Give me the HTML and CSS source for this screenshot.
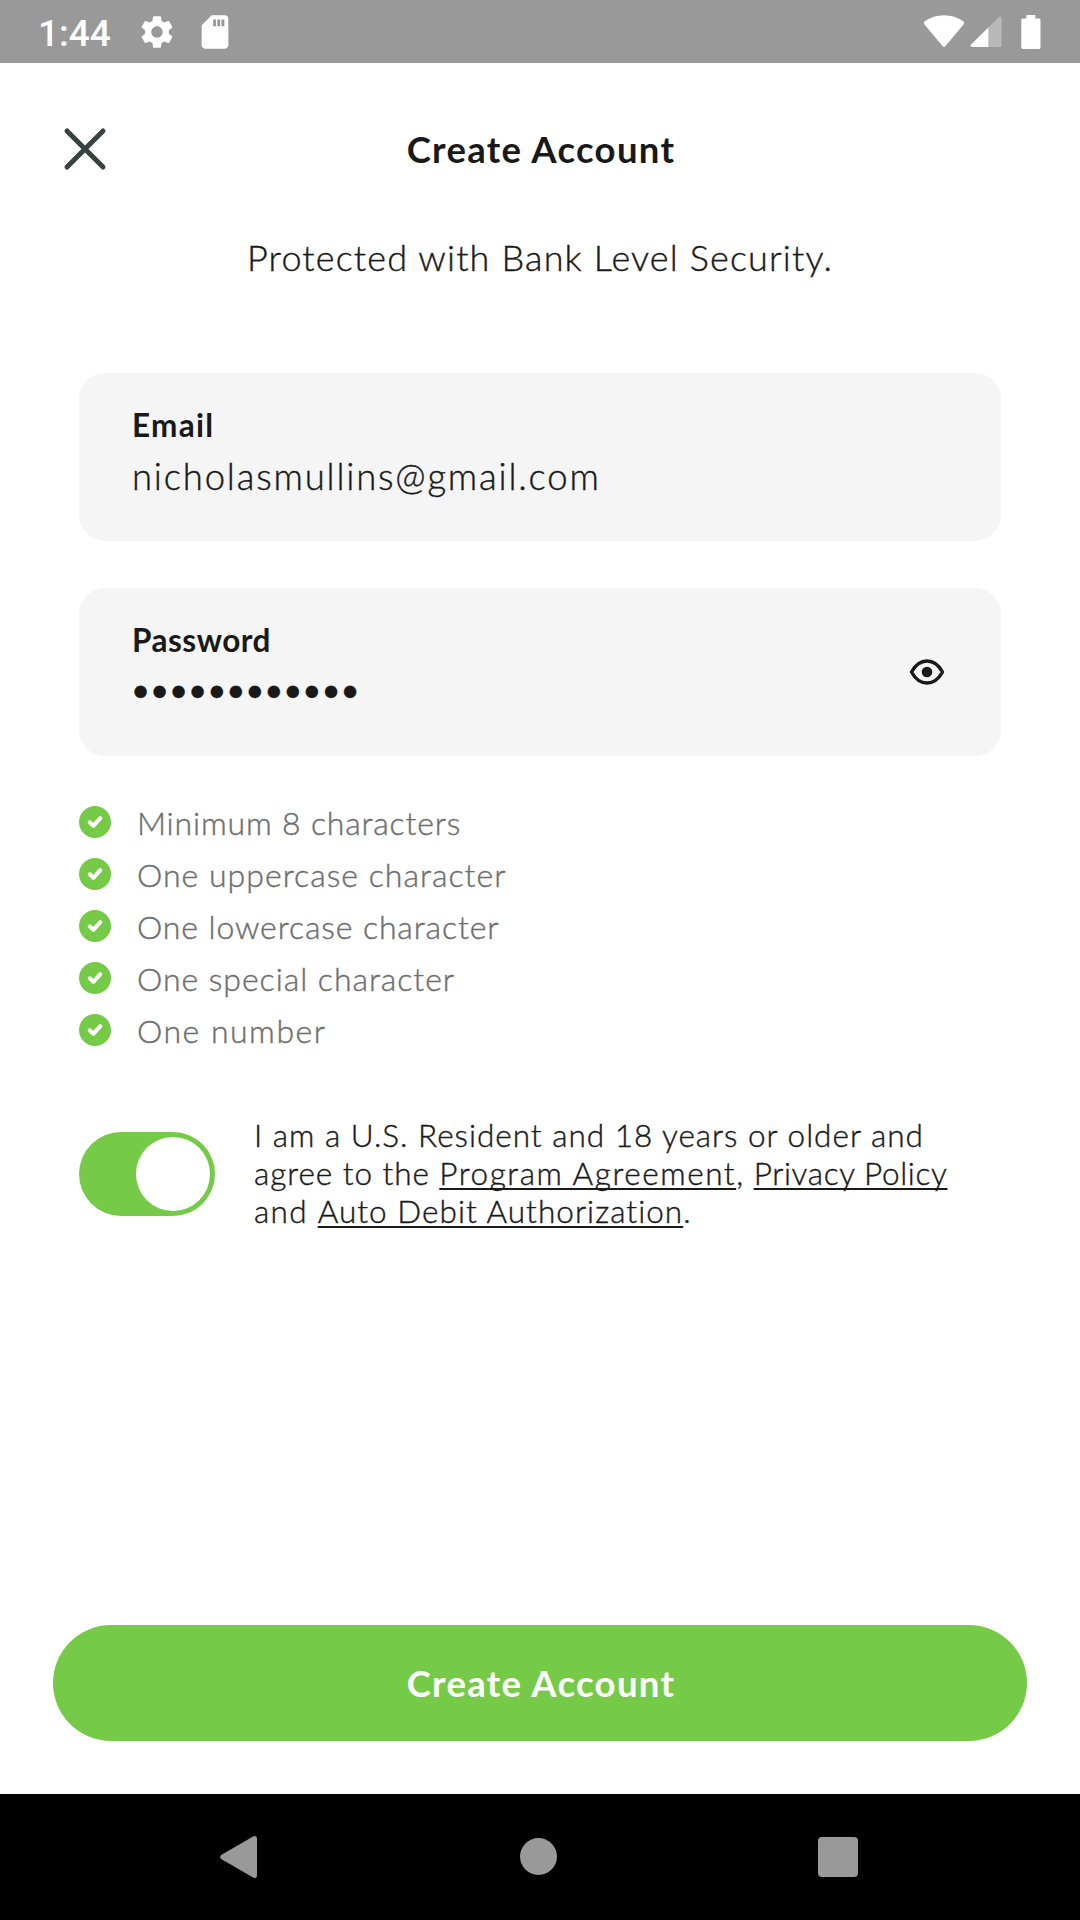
FILE: index.html
```html
<!DOCTYPE html>
<html lang="en">
<head>
<meta charset="utf-8">
<title>Create Account</title>
<link rel="stylesheet" href="styles.css">
</head>
<body>
<div class="screen">
  <div class="status">
    <span class="clock">1:44</span>
    <svg class="gear" width="38" height="38" viewBox="0 0 24 24"><path fill="#fff" d="M19.43 12.98c.04-.32.07-.64.07-.98s-.03-.66-.07-.98l2.11-1.65c.19-.15.24-.42.12-.64l-2-3.46c-.12-.22-.39-.3-.61-.22l-2.49 1c-.52-.4-1.08-.73-1.69-.98l-.38-2.65C14.46 2.18 14.25 2 14 2h-4c-.25 0-.46.18-.49.42l-.38 2.65c-.61.25-1.17.59-1.69.98l-2.49-1c-.23-.09-.49 0-.61.22l-2 3.46c-.13.22-.07.49.12.64l2.11 1.65c-.04.32-.07.65-.07.98s.03.66.07.98l-2.11 1.65c-.19.15-.24.42-.12.64l2 3.46c.12.22.39.3.61.22l2.49-1c.52.4 1.08.73 1.69.98l.38 2.65c.03.24.24.42.49.42h4c.25 0 .46-.18.49-.42l.38-2.65c.61-.25 1.17-.59 1.69-.98l2.49 1c.23.09.49 0 .61-.22l2-3.46c.12-.22.07-.49-.12-.64l-2.11-1.65zM12 15.6c-1.98 0-3.6-1.62-3.6-3.6s1.62-3.6 3.6-3.6 3.6 1.62 3.6 3.6-1.62 3.6-3.6 3.6z"/></svg>
    <svg class="card-icon" width="40" height="40" viewBox="0 0 24 24"><path fill="#fff" d="M18 2h-8L4.020 8 4 20c0 1.100.9 2 2 2h12c1.100 0 2-.9 2-2V4c0-1.100-.9-2-2-2zM12.600 8.500h-1.700V4.500h1.700v4zm2.500 0h-1.700V4.500h1.700v4zm2.500 0h-1.700V4.500h1.700v4z"/></svg>
    <span class="spacer"></span>
    <svg width="42" height="34" viewBox="0 0 42 34"><path fill="#fff" d="M1.200 9.300Q0 7.600 1.700 6.300Q10 .2 21 .2T40.300 6.300Q42 7.600 40.800 9.300L22.500 31Q21 32.700 19.500 31Z"/></svg>
    <svg class="signal" width="32" height="32" viewBox="0 0 32 32"><path fill="#b8b8b8" d="M18 12 29 1q2-1.500 2.600.8V29.500Q31.600 31 30 31H18Z"/><path fill="#fff" d="M18.300 11.500V31H2Q-.3 30.600.9 28.700Z"/></svg>
    <svg class="battery" width="20" height="34" viewBox="0 0 20 34"><path fill="#fff" d="M5.300 0H14.300V3.500H18Q19.500 3.500 19.500 5V32.200Q19.500 34 18 34H1.800Q.3 34 .3 32.200V5Q.3 3.500 1.800 3.500H5.300Z"/></svg>
  </div>

  <header class="header">
    <svg class="close" width="44" height="44" viewBox="0 0 44 44"><path d="M4 4 40 40M40 4 4 40" stroke="#374341" stroke-width="5" stroke-linecap="round"/></svg>
    <h1 class="title">Create Account</h1>
  </header>
  <p class="subtitle">Protected with Bank Level Security.</p>

  <main class="form">
    <div class="field">
      <div class="field-text">
        <span class="label label-email">Email</span>
        <span class="value">nicholasmullins@gmail.com</span>
      </div>
    </div>
    <div class="field">
      <div class="field-text">
        <span class="label label-password">Password</span>
        <span class="value dots">••••••••••••</span>
      </div>
      <svg width="36" height="28" viewBox="0 0 36 28"><path d="M2.500 14Q8.500 3 18 3T33.500 14Q27.500 25 18 25T2.500 14Z" fill="none" stroke="#191919" stroke-width="3.400" stroke-linejoin="round"/><circle cx="18" cy="14" r="5.300" fill="#191919"/></svg>
    </div>

    <ul class="rules">
      <li class="rule"><span class="tick"><svg width="32" height="32" viewBox="0 0 32 32"><path d="M10.700 16.300 14.400 19.800 21.300 12.200"/></svg></span><span class="rule-min">Minimum 8 characters</span></li>
      <li class="rule"><span class="tick"><svg width="32" height="32" viewBox="0 0 32 32"><path d="M10.700 16.300 14.400 19.800 21.300 12.200"/></svg></span><span class="rule-upper">One uppercase character</span></li>
      <li class="rule"><span class="tick"><svg width="32" height="32" viewBox="0 0 32 32"><path d="M10.700 16.300 14.400 19.800 21.300 12.200"/></svg></span><span class="rule-lower">One lowercase character</span></li>
      <li class="rule"><span class="tick"><svg width="32" height="32" viewBox="0 0 32 32"><path d="M10.700 16.300 14.400 19.800 21.300 12.200"/></svg></span><span class="rule-special">One special character</span></li>
      <li class="rule"><span class="tick"><svg width="32" height="32" viewBox="0 0 32 32"><path d="M10.700 16.300 14.400 19.800 21.300 12.200"/></svg></span><span class="rule-number">One number</span></li>
    </ul>

    <div class="terms">
      <div class="toggle"><span class="knob"></span></div>
      <p class="terms-text">I am a U.S. Resident and 18 years or older and<br><span class="lead">agree to the </span><a class="link link-program">Program Agreement</a>, <a class="link link-privacy">Privacy Policy</a><br><span class="lead-and">and </span><a class="link link-debit">Auto Debit Authorization</a>.</p>
    </div>
  </main>

  <button class="submit">Create Account</button>

  <nav class="nav">
    <svg width="38" height="44" viewBox="0 0 38 44"><path fill="#999" d="M1.200 20 33.500 1.200Q37 0 37 3.500V40.500Q37 44 33.500 42.800L1.200 24Q-1 22 1.200 20Z"/></svg>
    <span class="home"></span>
    <span class="recent"></span>
  </nav>
</div>
</body>
</html>
```
FILE: styles.css
```css
* { box-sizing: border-box; margin: 0; padding: 0; }
body { background: #fff; color: #191919; font-family: Lato, "Open Sans", sans-serif; }
svg { display: block; flex: none; }
.screen { width: 1080px; height: 1920px; display: flex; flex-direction: column; overflow: hidden; }

.status { height: 63px; flex: none; background: #999; display: flex; align-items: center; padding: 0 39px 0 38px; }
.clock { font: 500 37px/63px Roboto, sans-serif; color: #fff; letter-spacing: 0; padding-top: 4px; }
.gear { margin-left: 27px; }
.card-icon { margin-left: 19px; }
.spacer { flex: 1; }
.signal { margin-left: 5px; }
.battery { margin-left: 19px; }

.header { height: 172px; flex: none; display: grid; grid-template-columns: 44px 1fr 44px; align-items: center; padding: 0 61px 0 63px; }
.title { font-size: 36.5px; font-weight: 700; line-height: 44px; letter-spacing: 1.3px; text-align: center; white-space: nowrap; }
.subtitle { font-size: 36px; font-weight: 300; line-height: 44px; letter-spacing: 1.15px; text-align: center; }

.subtitle, .value, .rule, .terms-text { -webkit-text-stroke: 0.4px currentColor; }

.form { padding: 94px 79px 0; flex: 1; }
.field { height: 168px; border-radius: 26px; background: #f5f5f5; padding: 0 56px 0 53px; display: flex; align-items: center; justify-content: space-between; }
.field + .field { margin-top: 47px; }
.field-text { display: flex; flex-direction: column; gap: 8px; height: 105px; }
.label { font-size: 31.5px; font-weight: 700; line-height: 41px; }
.label-email { letter-spacing: 1.3px; }
.label-password { letter-spacing: 0.5px; }
.value { font-size: 36.5px; font-weight: 300; line-height: 44px; letter-spacing: 1.8px; }
.dots { font-size: 33px; line-height: 40px; font-weight: 400; letter-spacing: -0.1px; margin-left: -1px; -webkit-text-stroke: 0.3px currentColor; }

.rules { list-style: none; margin-top: 40px; }
.rule { height: 52px; display: flex; align-items: center; gap: 26px; font-size: 32px; font-weight: 300; color: #6e6e6e; }
.tick { width: 32px; height: 32px; border-radius: 50%; background: #75cb48; }
.tick path { fill: none; stroke: #fff; stroke-width: 4; stroke-linecap: round; stroke-linejoin: round; }
.rule-min { letter-spacing: 0.82px; }
.rule-upper { letter-spacing: 1.02px; }
.rule-lower { letter-spacing: 0.88px; }
.rule-special { letter-spacing: 0.96px; }
.rule-number { letter-spacing: 1.5px; }

.terms { margin-top: 60px; display: flex; align-items: center; gap: 39px; }
.toggle { width: 136px; height: 84px; border-radius: 42px; background: #75cb48; display: flex; align-items: center; justify-content: flex-end; padding-right: 5px; margin-top: 2px; }
.knob { width: 74px; height: 74px; border-radius: 50%; background: #fff; }
.terms-text { font-size: 31.5px; font-weight: 300; line-height: 38px; letter-spacing: 1px; white-space: nowrap; }
.lead { letter-spacing: 0.95px; }
.lead-and { letter-spacing: 1.3px; }
.link { text-decoration: underline; text-decoration-thickness: 2px; text-underline-offset: 3px; text-decoration-skip-ink: none; }
.link-program { letter-spacing: 1.57px; }
.link-privacy { letter-spacing: 0.66px; }
.link-debit { letter-spacing: 1.05px; }

.submit { height: 116px; flex: none; margin: 0 53px 53px; border: 0; border-radius: 58px; background: #75cb48; color: #fff; font: 700 36.5px/44px Lato, sans-serif; letter-spacing: 1.3px; padding-left: 2px; }

.nav { height: 126px; flex: none; background: #000; display: flex; align-items: center; justify-content: space-between; padding: 0 222px 1px 220px; }
.home { width: 37px; height: 37px; border-radius: 50%; background: #999; margin-left: 1px; }
.recent { width: 40px; height: 40px; border-radius: 4px; background: #999; }
```
